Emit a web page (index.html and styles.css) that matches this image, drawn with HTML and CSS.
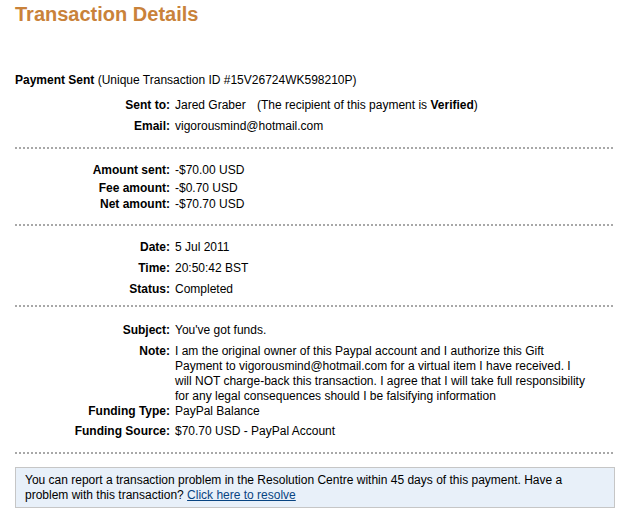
FILE: index.html
```html
<!DOCTYPE html>
<html lang="en">
<head>
    <meta charset="UTF-8">
    <meta name="viewport" content="width=device-width, initial-scale=1.0">
    <title>Transaction Details</title>
    <link rel="stylesheet" href="styles.css">
</head>

<body>
<div class="page">
    <h1 class="title">Transaction Details</h1>

    <p class="summary"><b>Payment Sent</b> (Unique Transaction ID #15V26724WK598210P)</p>

    <div class="details">
        <div class="row">
            <span class="label">Sent to:</span>
            <span class="value">Jared Graber <span class="note-gap">(The recipient of this payment is <b>Verified</b>)</span></span>
        </div>
        <div class="row">
            <span class="label">Email:</span>
            <span class="value">vigorousmind@hotmail.com</span>
        </div>
    </div>

    <div class="dots"></div>

    <div class="details">
        <div class="row">
            <span class="label">Amount sent:</span>
            <span class="value">-$70.00 USD</span>
        </div>
        <div class="row row-flat">
            <span class="label">Fee amount:</span>
            <span class="value">-$0.70 USD</span>
        </div>
        <div class="row row-end">
            <span class="label">Net amount:</span>
            <span class="value">-$70.70 USD</span>
        </div>
    </div>

    <div class="dots"></div>

    <div class="details">
        <div class="row">
            <span class="label">Date:</span>
            <span class="value">5 Jul 2011</span>
        </div>
        <div class="row">
            <span class="label">Time:</span>
            <span class="value">20:50:42 BST</span>
        </div>
        <div class="row">
            <span class="label">Status:</span>
            <span class="value">Completed</span>
        </div>
    </div>

    <div class="dots dots-close"></div>

    <div class="details">
        <div class="row">
            <span class="label">Subject:</span>
            <span class="value">You've got funds.</span>
        </div>
        <div class="row row-top">
            <span class="label">Note:</span>
            <span class="value">I am the original owner of this Paypal account and I authorize this Gift Payment to vigorousmind@hotmail.com for a virtual item I have received. I will NOT charge-back this transaction. I agree that I will take full responsibility for any legal consequences should I be falsifying information</span>
        </div>
        <div class="row row-under">
            <span class="label">Funding Type:</span>
            <span class="value">PayPal Balance</span>
        </div>
        <div class="row">
            <span class="label">Funding Source:</span>
            <span class="value">$70.70 USD - PayPal Account</span>
        </div>
    </div>

    <div class="dots"></div>

    <div class="notice">
        You can report a transaction problem in the Resolution Centre within 45 days of this payment. Have a problem with this transaction? <a href="#" class="link">Click here to resolve</a>
    </div>
</div>
</body>
</html>
```

FILE: styles.css
```css
body {
  margin: 0;
  font-family: "Liberation Sans", Arial, sans-serif;
  font-size: 12px;
  line-height: 15px;
  color: #000;
  background: #fff;
}

.page {
  width: 600px;
  padding: 2px 0 0 15px;
}

.title {
  margin: 0;
  font-size: 20px;
  line-height: 24px;
  font-weight: bold;
  color: #c9823a;
}

.summary {
  margin: 47px 0 0;
}

.details {
  padding: 7px 0 0;
}

.dots + .details {
  padding-top: 0;
}

.row {
  display: grid;
  grid-template-columns: 155px 1fr;
  column-gap: 5px;
  padding: 3px 0;
}

.row-flat {
  padding: 0;
}

.row-end {
  padding: 1px 0 2px;
}

.row-top {
  padding-bottom: 0;
}

.row-under {
  padding: 0 0 2px;
}

.label {
  text-align: right;
  font-weight: bold;
}

.value {
  padding-right: 30px;
}

.note-gap {
  margin-left: 8px;
}

.dots {
  height: 2px;
  margin: 10px 0 11px;
  background: repeating-linear-gradient(to right, #a8a8a8 0, #a8a8a8 2px, transparent 2px, transparent 4px);
}

.dots-close {
  margin: 5px 0 13px;
}

.notice {
  margin-top: 13px;
  padding: 5px 9px 4px;
  background: #e8f0f9;
  border: 1px solid #c6c6c6;
}

.link {
  color: #084482;
  text-decoration: underline;
}
```
